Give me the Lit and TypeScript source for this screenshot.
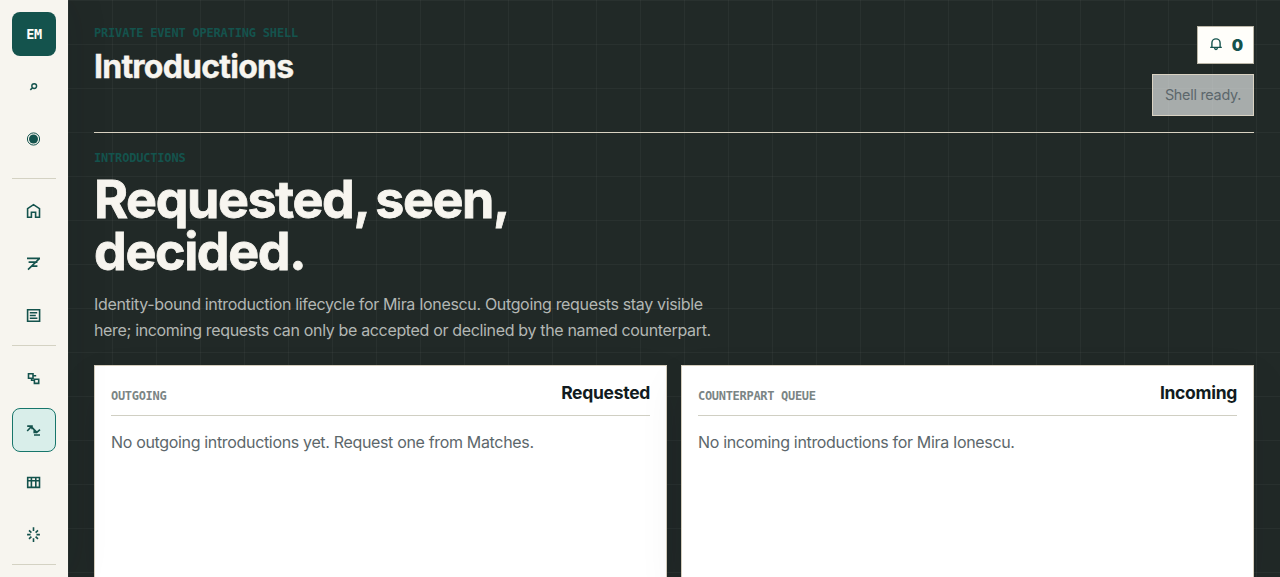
import { LitElement, html, css, svg } from "lit";
import { customElement } from "lit/decorators.js";

const glyphs = {
  search: svg`<circle cx="9.2" cy="8.1" r="2.4" stroke-width="1.4"/><path d="M7.4 10 5.3 11.9"/>`,
  target: svg`<circle cx="8.5" cy="9" r="6.1" stroke-width="1"/><circle cx="8.5" cy="9" r="4.5" fill="currentColor" stroke="none"/>`,
  home: svg`<path d="M2.6 5.6 8.5 1.6 14.5 5.6V14.3H10.6V9.3H6.4V14.3H2.6Z"/>`,
  flow: svg`<path d="M2 3.4H15M3.6 7.1H12.4M6.6 11.1H12.4M14.6 3.4 3 14.6"/>`,
  list: svg`<path d="M2.6 2.7H14.6V14.3H2.6Z"/><path stroke-width="1.4" d="M4.8 5.8H12.2M4.8 8.5H10.8M4.8 11.2H12.4"/>`,
  link: svg`<path d="M3.5 3.7H8V8.2H3.5ZM9.4 9.2H13.7V13.4H9.4ZM8 5.7H11.2M6.6 8.2V10.2H9"/>`,
  intro: svg`<path d="M2.2 9 6.3 4.7 11.8 10.4 15 7.6M2.2 4.1H7V7.2M9.2 8V10.4H12M9 13H15"/>`,
  table: svg`<path d="M2.7 3.5H14.5V13.4H2.7ZM2.7 6.8H14.5M6.4 3.5V13.4M10.8 3.5V13.4"/>`,
  spark: svg`<path d="M8.5 1.3V5M8.5 12.2V15.9M2.1 8.6H5.6M11.4 8.6H14.9M4 4.3 6.4 6.6M10.6 10.6 13 12.9M4 12.9 6.4 10.6M10.6 6.6 13 4.3"/>`,
  bell: svg`<path stroke-width="1.4" d="M2.2 10.4H13.8M3.9 10.2V6A4.1 4.1 0 0 1 12.1 6V10.2M6.4 11.2Q8 13.8 9.6 11.2"/>`,
};

@customElement("app-root")
export class AppRoot extends LitElement {
  static styles = css`
    :host { display: flex; height: 100vh; overflow: hidden; background: #212927; font-family: Inter, sans-serif; color: #111b20; }
    * { box-sizing: border-box; }
    h1, h2, h3, p { margin: 0; }
    .rail { width: 68px; flex: none; padding: 12px 12px 0; background: #f7f5ef; display: flex; flex-direction: column; gap: 8px; color: #14534d; z-index: 1; box-shadow: 0 0 42px rgba(17, 27, 32, 0.12); }
    .brand { height: 44px; flex: none; border-radius: 8px; background: #14534d; color: #fffefa; display: grid; place-items: center; padding-top: 1px; font: 700 13.5px/1 "DejaVu Sans Mono", monospace; letter-spacing: -0.4px; }
    .item { height: 44px; flex: none; border: 1px solid transparent; border-radius: 8px; display: grid; place-items: center; padding-right: 1px; }
    .active { background: #d9eeea; border-color: #17766b; }
    .sep { height: 1px; flex: none; background: #d4d2c3; margin: 0 0 2px; }
    .first { margin-top: 10px; }
    svg { width: 17px; height: 16px; fill: none; stroke: currentColor; stroke-width: 1.6; display: block; }
    .main { flex: 1; min-width: 0; padding: 26px 26px 0; display: flex; flex-direction: column; background-image: linear-gradient(rgba(255,255,255,.035) 1px, transparent 1px), linear-gradient(90deg, rgba(255,255,255,.035) 1px, transparent 1px); background-size: 44px 44px; }
    .top { height: 107px; flex: none; border-bottom: 1px solid #d9d2c2; display: flex; justify-content: space-between; }
    .eyebrow { font: 700 12px/14px "DejaVu Sans Mono", monospace; letter-spacing: -0.19px; color: #14534d; text-transform: uppercase; white-space: pre; }
    .title { font-size: 32px; line-height: 36px; font-weight: 700; letter-spacing: -0.76px; -webkit-text-stroke: 0.4px currentColor; color: #f7f5ef; margin-top: 9px; }
    .tools { display: flex; flex-direction: column; align-items: flex-end; gap: 10px; }
    .bell { height: 38px; width: 57px; border: 1px solid #bcb7a8; background: #fffefa; color: #14534d; display: flex; align-items: center; padding: 0 10px; justify-content: space-between; font-size: 16px; font-weight: 900; }
    .ready { height: 42px; width: 102px; border: 1px solid #d9d2c2; background: rgba(250,254,253,.62); color: #5c676b; font-size: 14.4px; letter-spacing: -0.27px; display: grid; place-items: center; padding-bottom: 2px; white-space: nowrap; }
    .intro { margin-top: 18px; }
    .hero { font-size: 52px; line-height: 52px; font-weight: 700; letter-spacing: -1.4px; word-spacing: -3.5px; -webkit-text-stroke: 0.8px currentColor; color: #f7f5ef; margin-top: 9px; }
    .lede { font-size: 16px; line-height: 26px; letter-spacing: -0.34px; color: #b3b7b4; margin-top: 13px; white-space: nowrap; }
    .cards { flex: 1; display: grid; grid-template-columns: 1fr 1fr; gap: 14px; margin-top: 22px; }
    .card { border: 1px solid #d4cdbd; border-bottom: 0; background: #fff; padding: 16px 16px 0; box-shadow: 0 18px 42px rgba(17,27,32,.08); }
    .head { height: 34px; border-bottom: 1px solid #d0cfc3; display: flex; justify-content: space-between; }
    .head .eyebrow { color: #7b8585; margin-top: 7px; letter-spacing: -0.3px; }
    .head h3 { font-size: 17.5px; line-height: 22px; letter-spacing: -0.3px; font-weight: 700; }
    .empty { color: #5c676b; font-size: 16px; line-height: 26px; letter-spacing: -0.335px; margin-top: 13px; }
  `;
  icon(name: keyof typeof glyphs) {
    return html`<svg viewBox="0 0 17 16">${glyphs[name]}</svg>`;
  }
  item(name: keyof typeof glyphs, active = false) {
    return html`<div class="item ${active ? "active" : ""}">${this.icon(name)}</div>`;
  }
  card(label: string, title: string, text: string) {
    return html`<section class="card"><div class="head"><div class="eyebrow">${label}</div><h3>${title}</h3></div><p class="empty">${text}</p></section>`;
  }
  render() {
    return html`
      <nav class="rail">
        <div class="brand">EM</div>
        ${this.item("search")}${this.item("target")}
        <div class="sep first"></div>
        ${this.item("home")}${this.item("flow")}${this.item("list")}
        <div class="sep"></div>
        ${this.item("link")}${this.item("intro", true)}${this.item("table")}${this.item("spark")}
        <div class="sep"></div>
      </nav>
      <main class="main">
        <header class="top">
          <div><div class="eyebrow">Private event operating shell</div><h1 class="title">Introductions</h1></div>
          <div class="tools"><div class="bell">${this.icon("bell")}<span>0</span></div><div class="ready">Shell ready.</div></div>
        </header>
        <div class="intro">
          <div class="eyebrow">Introductions</div>
          <h2 class="hero">Requested, seen,<br />decided.</h2>
          <p class="lede">Identity-bound introduction lifecycle for Mira Ionescu. Outgoing requests stay visible<br />here; incoming requests can only be accepted or declined by the named counterpart.</p>
        </div>
        <div class="cards">
          ${this.card("Outgoing", "Requested", "No outgoing introductions yet. Request one from Matches.")}
          ${this.card("Counterpart queue", "Incoming", "No incoming introductions for Mira Ionescu.")}
        </div>
      </main>`;
  }
}
